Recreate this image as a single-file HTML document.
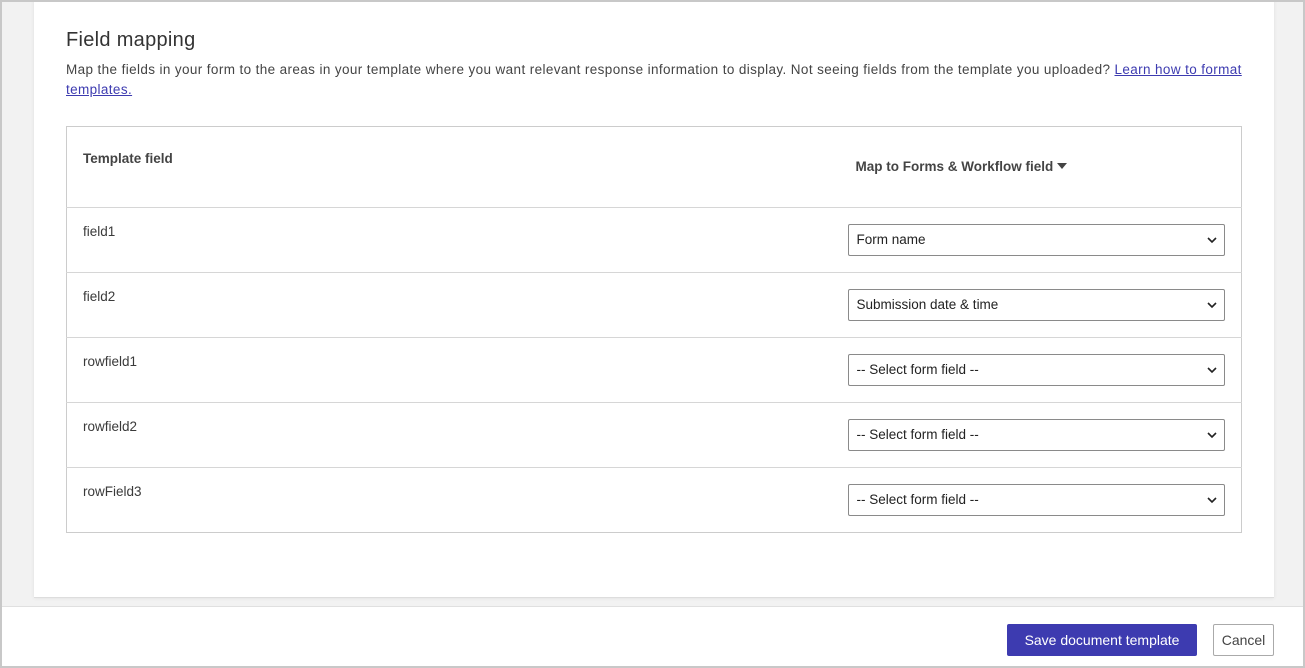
<!DOCTYPE html>
<html><head><style>
*{box-sizing:border-box;margin:0;padding:0}
body{width:1305px;height:668px;overflow:hidden;background:#f2f2f2;font-family:"Liberation Sans",sans-serif;color:#3a3a3a;position:relative}
.frame{position:absolute;left:0;top:0;width:1305px;height:668px;border:2px solid #c8c8c8}
.panel{position:absolute;left:34px;top:0;width:1240px;height:598px;background:#fff;border-bottom:1px solid #ddd;box-shadow:0 0 4px rgba(0,0,0,.08)}
h2{position:absolute;left:66px;top:29px;font-size:20px;font-weight:normal;color:#333;letter-spacing:0.3px}
.desc{position:absolute;left:66px;top:60px;width:1180px;font-size:13.5px;line-height:20px;color:#444;letter-spacing:0.38px}
.desc a{color:#3d3bb0;text-decoration:underline}
table{position:absolute;left:66px;top:126px;width:1176px;border-collapse:collapse;border:1px solid #ccc;font-size:13.5px}
td{border-top:1px solid #d6d6d6;height:65px;vertical-align:top;padding:16px 16px 0}
tr.h td{height:81px;font-weight:bold;color:#444;border-top:none;padding-top:24px}
td.r{width:394px;padding:16px 16px 0 0}
.sel{width:377px;height:32px;border:1px solid #8a8a8a;border-radius:2px;padding:7px 8px;font-size:13.5px;color:#222;position:relative}
.sel svg{position:absolute;right:7px;top:12px}
.footer{position:absolute;left:2px;top:606px;width:1301px;height:61px;background:#fff;border-top:1px solid #e0e0e0}
.save{position:absolute;left:1007px;top:624px;width:190px;height:32px;background:#3d3bb0;color:#fff;border-radius:2px;font-size:14px;text-align:center;line-height:32px}
.cancel{position:absolute;left:1213px;top:624px;width:61px;height:32px;border:1px solid #aaa;border-radius:2px;font-size:14px;text-align:center;line-height:30px;color:#444;background:#fff}
</style></head><body>
<div class="panel"></div>
<h2>Field mapping</h2>
<div class="desc">Map the fields in your form to the areas in your template where you want relevant response information to display. Not seeing fields from the template you uploaded? <a>Learn how to format templates.</a></div>
<table>
<tr class="h"><td>Template field</td><td class="r" style="padding-top:32px;padding-left:8px">Map to Forms &amp; Workflow field <span style="display:inline-block;width:0;height:0;border-left:5px solid transparent;border-right:5px solid transparent;border-top:6px solid #444;vertical-align:2px"></span></td></tr>
<tr><td>field1</td><td class="r"><div class="sel">Form name<svg width="10" height="7" viewBox="0 0 10 7"><path d="M1 1l4 4 4-4" fill="none" stroke="#222" stroke-width="1.6"/></svg></div></td></tr>
<tr><td>field2</td><td class="r"><div class="sel">Submission date &amp; time<svg width="10" height="7" viewBox="0 0 10 7"><path d="M1 1l4 4 4-4" fill="none" stroke="#222" stroke-width="1.6"/></svg></div></td></tr>
<tr><td>rowfield1</td><td class="r"><div class="sel">-- Select form field --<svg width="10" height="7" viewBox="0 0 10 7"><path d="M1 1l4 4 4-4" fill="none" stroke="#222" stroke-width="1.6"/></svg></div></td></tr>
<tr><td>rowfield2</td><td class="r"><div class="sel">-- Select form field --<svg width="10" height="7" viewBox="0 0 10 7"><path d="M1 1l4 4 4-4" fill="none" stroke="#222" stroke-width="1.6"/></svg></div></td></tr>
<tr><td>rowField3</td><td class="r"><div class="sel">-- Select form field --<svg width="10" height="7" viewBox="0 0 10 7"><path d="M1 1l4 4 4-4" fill="none" stroke="#222" stroke-width="1.6"/></svg></div></td></tr>
</table>
<div class="footer"></div>
<div class="save">Save document template</div>
<div class="cancel">Cancel</div>
<div class="frame"></div>
</body></html>
